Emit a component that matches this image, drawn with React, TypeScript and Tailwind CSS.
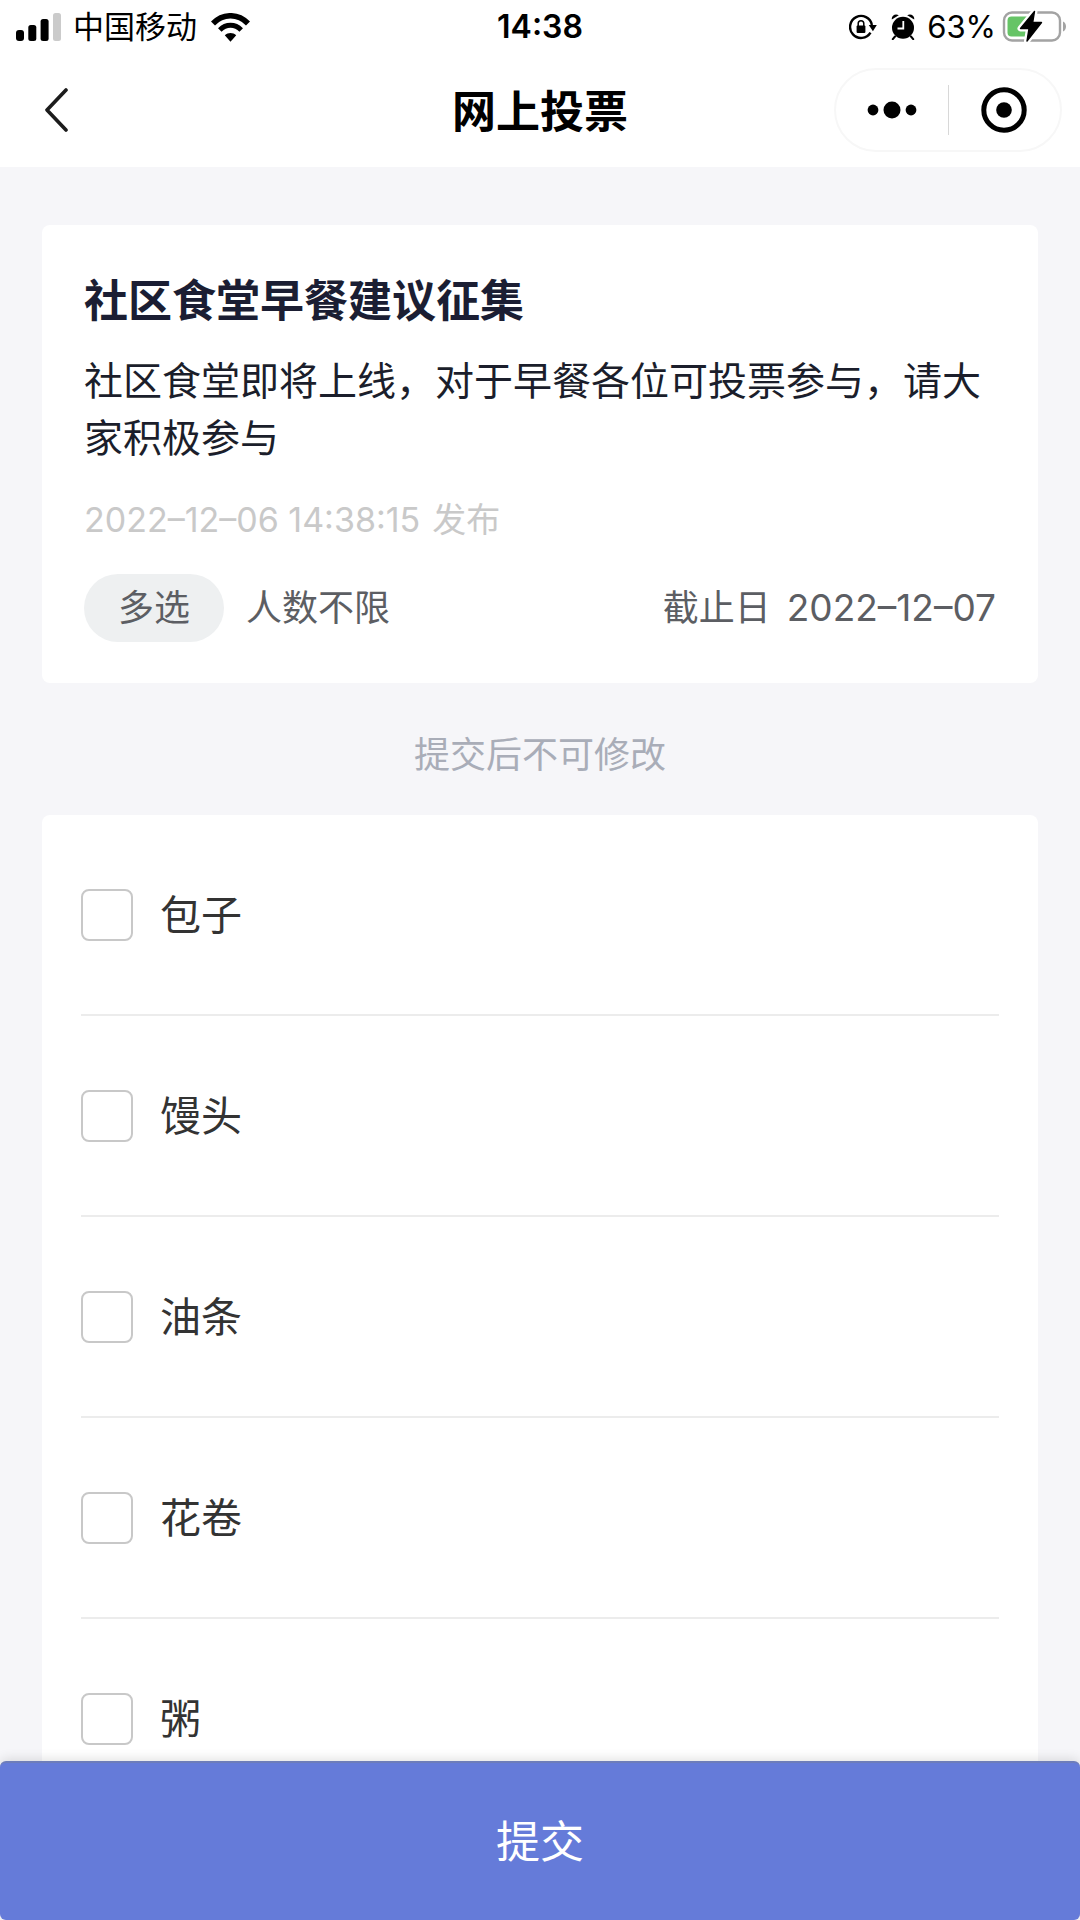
import { useState } from "react";

const OPTIONS = ["包子", "馒头", "油条", "花卷", "粥"];

function SignalIcon() {
  return (
    <svg className="h-7 w-[45px]" viewBox="0 0 45 28" aria-hidden="true">
      <rect x="0" y="17" width="8" height="11" rx="3" fill="#000" />
      <rect x="12.300" y="12" width="8" height="16" rx="2.500" fill="#000" />
      <rect x="24.600" y="6" width="8" height="22" rx="2.500" fill="#000" />
      <rect x="37" y="0" width="8" height="28" rx="2.500" fill="#cbcbcb" />
    </svg>
  );
}

function WifiIcon() {
  return (
    <svg className="h-[29px] w-[39px]" viewBox="0 0 39 29" aria-hidden="true">
      <path d="M2 10.500C12 .200 27 .200 37 10.500" fill="none" stroke="#000" strokeWidth="5.600" />
      <path d="M8.800 17C15 10.800 24 10.800 30.200 17" fill="none" stroke="#000" strokeWidth="5" />
      <path d="M13.800 22.300C17 19.300 22 19.300 25.200 22.300L19.500 28.800Z" fill="#000" />
    </svg>
  );
}

function RotationLockIcon() {
  return (
    <svg className="h-[26px] w-7" viewBox="0 0 28 26" aria-hidden="true">
      <path d="M21.500 18.600A11 11 0 1 1 22.900 11" fill="none" stroke="#000" strokeWidth="2.400" />
      <path d="M19.800 11H27.800L23.900 17.200Z" fill="#000" />
      <rect x="7.600" y="11.500" width="8.800" height="7.500" rx="1" fill="#000" />
      <path d="M9.200 12V9.500a2.800 2.800 0 0 1 5.600 0V12" fill="none" stroke="#000" strokeWidth="1.500" />
    </svg>
  );
}

function AlarmIcon() {
  return (
    <svg className="h-[26px] w-6" viewBox="0 0 24 26" aria-hidden="true">
      <circle cx="12" cy="13.800" r="11" fill="#000" />
      <path d="M.800 5.500C.200 1.500 4.500-.800 7.800 1.300Z" fill="#000" />
      <path d="M23.200 5.500C23.800 1.500 19.500-.800 16.200 1.300Z" fill="#000" />
      <path d="M4 22.500 1.800 25.200M20 22.500l2.200 2.700" stroke="#000" strokeWidth="2" strokeLinecap="round" />
      <path d="M12.300 7v7.500H6.500" fill="none" stroke="#fff" strokeWidth="1.800" />
    </svg>
  );
}

function BatteryIcon() {
  return (
    <svg className="h-8 w-16 overflow-visible" viewBox="0 0 64 32" aria-hidden="true">
      <rect x="1" y="1.500" width="56" height="28" rx="8" fill="#fff" stroke="#a3a3a3" strokeWidth="2.400" />
      <path d="M8.500 5.500H29V25.500H8.500A4 4 0 0 1 4.500 21.500V9.500A4 4 0 0 1 8.500 5.500Z" fill="#66c466" />
      <path d="M60 10.500C64 12 64 19 60 20.500Z" fill="#a3a3a3" />
      <path
        d="M31.500.500 17.500 17.500H26L24 30 38.500 11.500H29.700Z"
        fill="#000"
        stroke="#fff"
        strokeWidth="6"
        strokeLinejoin="round"
      />
      <path
        d="M31.500.500 17.500 17.500H26L24 30 38.500 11.500H29.700Z"
        fill="#000"
        stroke="#000"
        strokeWidth="1.400"
        strokeLinejoin="round"
      />
    </svg>
  );
}

function StatusBar() {
  return (
    <div className="grid h-[54px] grid-cols-[1fr_auto_1fr] items-center px-4 text-black">
      <div className="flex items-center">
        <SignalIcon />
        <span className="ml-3 text-[31px] leading-10">中国移动</span>
        <span className="ml-[14px]">
          <WifiIcon />
        </span>
      </div>
      <time className="text-[32px] leading-10 font-semibold">14:38</time>
      <div className="flex items-center justify-end">
        <RotationLockIcon />
        <span className="ml-[14px]">
          <AlarmIcon />
        </span>
        <span className="ml-3 text-[31px] leading-10">63%</span>
        <span className="-mr-[3px] ml-[7px]">
          <BatteryIcon />
        </span>
      </div>
    </div>
  );
}

function NavBar() {
  return (
    <div className="grid h-[113px] grid-cols-[1fr_auto_1fr] items-center px-[18px] pb-[2px]">
      <button type="button" aria-label="返回" className="flex h-16 w-16 items-center pl-[26px]">
        <svg className="h-11 w-6" viewBox="0 0 24 44" aria-hidden="true">
          <path d="M22 2 3 22 22 42" fill="none" stroke="#1c1c1c" strokeWidth="3.600" strokeLinecap="round" strokeLinejoin="round" />
        </svg>
      </button>
      <h1 className="pt-1 text-[44px] leading-[60px] font-bold text-black">网上投票</h1>
      <div className="flex h-[84px] w-[228px] items-center justify-self-end rounded-full border-2 border-[#f7f7f7]">
        <button type="button" aria-label="更多" className="flex h-full flex-1 items-center justify-center">
          <svg className="h-5 w-[50px]" viewBox="0 0 50 20" aria-hidden="true">
            <circle cx="6" cy="10" r="5.400" />
            <circle cx="25" cy="10" r="8.500" />
            <circle cx="44" cy="10" r="5.400" />
          </svg>
        </button>
        <span className="h-[50px] w-px bg-[#d8d8d8]" />
        <button type="button" aria-label="关闭" className="flex h-full flex-1 items-center justify-center">
          <svg className="h-[46px] w-[46px]" viewBox="0 0 46 46" aria-hidden="true">
            <circle cx="23" cy="23" r="20.200" fill="none" stroke="#000" strokeWidth="5" />
            <circle cx="23" cy="23" r="7.800" />
          </svg>
        </button>
      </div>
    </div>
  );
}

function PollCard() {
  return (
    <section className="rounded-lg bg-white px-[42px] pt-[46px] pb-[41px]">
      <h2 className="text-[44px] leading-[60px] font-bold text-[#1b1e33]">社区食堂早餐建议征集</h2>
      <p className="mt-[21px] text-[39px] leading-[57px] text-[#1b1e2b]">
        社区食堂即将上线，对于早餐各位可投票参与，请大家积极参与
      </p>
      <p className="mt-[30px] flex gap-3 text-[34px] leading-[48px] text-[#c9c9c9]">
        <time>2022–12–06 14:38:15</time>
        <span>发布</span>
      </p>
      <div className="mt-[30px] flex items-center text-[36px] leading-[68px] text-[#5c5e63]">
        <span className="rounded-full bg-[#eef0f1] px-[34px]">多选</span>
        <span className="ml-[22px]">人数不限</span>
        <span className="ml-auto flex gap-4">
          <span>截止日</span>
          <time className="text-[37px]">2022–12–07</time>
        </span>
      </div>
    </section>
  );
}

export default function App() {
  const [selected, setSelected] = useState<string[]>([]);

  const toggle = (name: string) =>
    setSelected((prev) => (prev.includes(name) ? prev.filter((n) => n !== name) : [...prev, name]));

  return (
    <div className="flex h-screen flex-col bg-[#f6f6f9] font-['Inter','Noto_Sans_CJK_SC',sans-serif]">
      <header className="shrink-0 bg-white">
        <StatusBar />
        <NavBar />
      </header>

      <main className="min-h-0 flex-1 overflow-y-auto px-[42px] pt-[58px] [scrollbar-width:none]">
        <PollCard />
        <p className="pt-[46px] pb-[34px] text-center text-[36px] leading-[52px] text-[#a9adb8]">提交后不可修改</p>
        <ul className="rounded-lg bg-white px-[39px]">
          {OPTIONS.map((name) => (
            <li key={name} className="border-b-2 border-[#ececec] last:border-b-0">
              <label className="flex h-[199px] items-center gap-[27px] text-[41px] leading-[56px] text-[#333]">
                <input
                  type="checkbox"
                  checked={selected.includes(name)}
                  onChange={() => toggle(name)}
                  className="size-[52px] shrink-0 appearance-none rounded-lg border-2 border-[#c8c8c8] bg-white checked:border-[#657bd9] checked:bg-[#657bd9]"
                />
                {name}
              </label>
            </li>
          ))}
        </ul>
      </main>

      <button
        type="button"
        className="relative h-[159px] shrink-0 rounded-md border-t-2 border-[#6d7dba] bg-[#657bd9] text-[44px] leading-[60px] text-white shadow-[0_-2px_12px_rgba(0,0,0,0.12)]"
      >
        提交
      </button>
    </div>
  );
}
